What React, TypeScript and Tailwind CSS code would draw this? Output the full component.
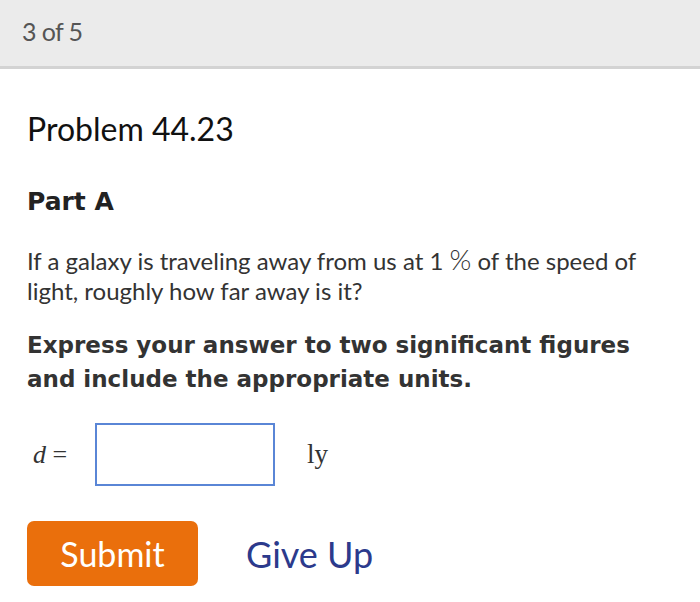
import React from 'react';

const sans = { fontFamily: 'Lato, "Open Sans", sans-serif' };
const heavy = { fontFamily: '"DejaVu Sans", Verdana, sans-serif' };
const serif = { fontFamily: '"Liberation Serif", serif' };

function App() {
    return (
        <div className="w-[700px] h-[602px] bg-white overflow-hidden" style={sans}>
            {/* Header */}
            <div className="h-[69px] bg-[#ebebeb] border-b-[3px] border-[#d3d3d3] flex items-center pl-[22px] pb-[4px]">
                <span className="text-[25px] tracking-tight text-[#555] leading-none">3 of 5</span>
            </div>

            <div className="pl-[27px] pr-[40px]">
                <h1 className="text-[32px] text-[#111] leading-none mt-[44px]">Problem 44.23</h1>

                <h2 className="text-[25px] font-bold text-[#222] leading-none mt-[44px]" style={heavy}>Part A</h2>

                <p className="text-[24px] text-[#333] leading-[30px] mt-[31px]">
                    If a galaxy is traveling away from us at 1 <span className="text-[28px] font-light leading-none">%</span> of the speed of light, roughly how far away is it?
                </p>

                <p className="text-[23px] font-bold text-[#333] leading-[34px] mt-[22px]" style={heavy}>
                    Express your answer to two significant figures and include the appropriate units.
                </p>

                {/* Answer row */}
                <div className="flex items-center mt-[27px]">
                    <span className="text-[26px] text-[#333] w-[68px] pl-[6px]" style={serif}>
                        <i>d</i> =
                    </span>
                    <div className="w-[180px] h-[63px] border-2 border-[#5a86d6] bg-white"></div>
                    <span className="text-[27px] text-[#333] ml-[32px]" style={serif}>ly</span>
                </div>

                {/* Buttons */}
                <div className="flex items-center mt-[35px]">
                    <button className="w-[171px] h-[65px] bg-[#ea6f0c] rounded-[7px] text-white text-[34px] leading-none">
                        Submit
                    </button>
                    <a href="#" className="ml-[48px] text-[36px] text-[#2c3a8c] leading-none">Give Up</a>
                </div>
            </div>
        </div>
    );
}

export default App;
